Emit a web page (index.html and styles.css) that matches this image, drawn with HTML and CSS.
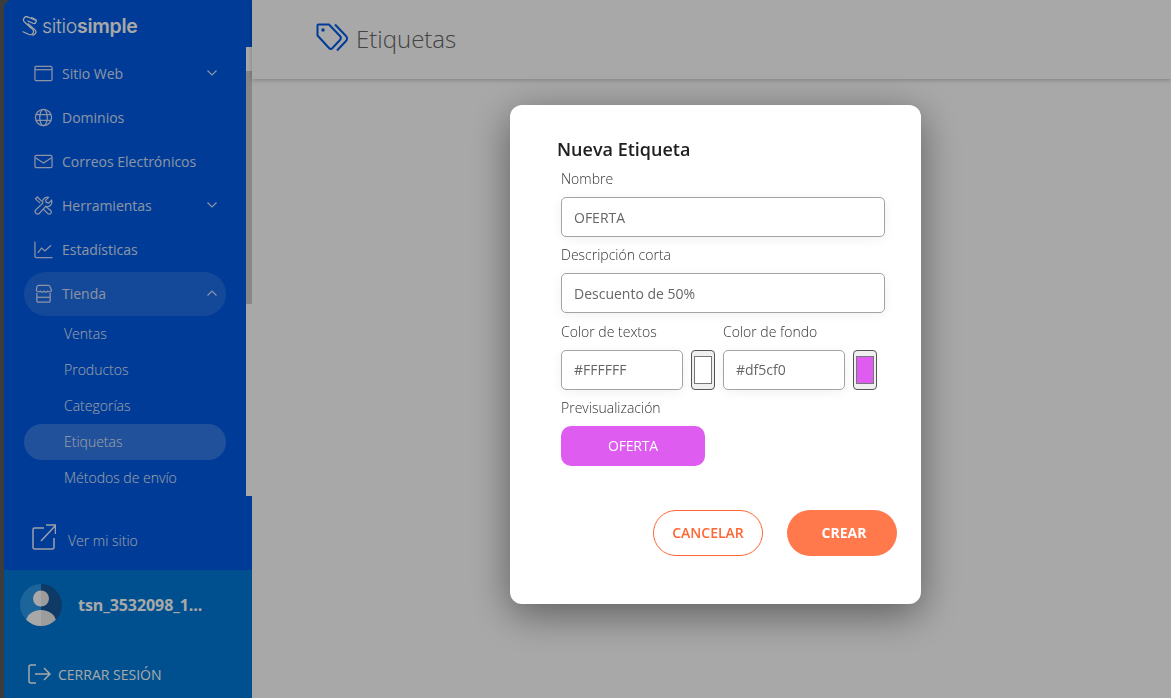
FILE: index.html
```html
<!DOCTYPE html>
<html lang="es">
<head>
  <meta charset="UTF-8">
  <meta name="viewport" content="width=device-width, initial-scale=1.0">
  <title>Etiquetas</title>
  <link rel="stylesheet" href="styles.css">
</head>
<body>
  <div class="side-frame">
    <aside class="sidebar">
      <div class="logo">
        <svg class="logo-mark" viewBox="0 0 15 20" fill="none" stroke="currentColor" stroke-width="1.200" stroke-linecap="round">
          <path d="M14 4.500 6.500 1.200A3 3 0 0 0 3 6.500L9.500 12.500A3 3 0 0 1 7 18.500L1 15.800"/>
          <path d="M9.500 1.500 12.800 3A2.300 2.300 0 0 1 11 7.300L5.800 5"/>
          <path d="M6 7.800 12.500 13.500A3 3 0 0 1 9.800 18.800"/>
        </svg>
        <span>sitio<b>simple</b></span>
      </div>
      <div class="nav-wrap">
        <nav class="nav">
          <a class="nav-item">
            <svg class="nav-icon" viewBox="0 0 20 20"><rect x="1" y="2.500" width="18" height="15" rx="1.500"/><path d="M1 6h18"/></svg>
            <span>Sitio Web</span>
            <svg class="chev" viewBox="0 0 12 8"><path d="M1.500 1.500 6 6l4.500-4.500"/></svg>
          </a>
          <a class="nav-item">
            <svg class="nav-icon" viewBox="0 0 20 20"><circle cx="10" cy="10" r="8.500"/><ellipse cx="10" cy="10" rx="4" ry="8.500"/><path d="M2 7h16M2 13h16"/></svg>
            <span>Dominios</span>
          </a>
          <a class="nav-item">
            <svg class="nav-icon" viewBox="0 0 20 20"><rect x="1" y="3.500" width="18" height="13" rx="1.500"/><path d="m1.500 6 8.500 5.500L18.500 6"/></svg>
            <span>Correos Electrónicos</span>
          </a>
          <a class="nav-item">
            <svg class="nav-icon" viewBox="0 0 20 20"><path d="m18.500 4.500-3 3-2.500-.7-.7-2.500 3-3a5 5 0 0 0-6 6.200L2 14.500a2.600 2.600 0 0 0 3.700 3.700L12.300 11a5 5 0 0 0 6.200-6.500z"/><path d="M6.500 7.500 1.500 3 3.500 1 8.300 5.700"/><path d="m11.800 10.500 6 5a2.300 2.300 0 0 1-2.800 3.400L9.500 13.500"/></svg>
            <span>Herramientas</span>
            <svg class="chev" viewBox="0 0 12 8"><path d="M1.500 1.500 6 6l4.500-4.500"/></svg>
          </a>
          <a class="nav-item">
            <svg class="nav-icon" viewBox="0 0 20 20"><path d="M1 1.500V17a1.500 1.500 0 0 0 1.500 1.500H19.500"/><path d="m4 13.500 4-5 3.500 3L18 5.500"/></svg>
            <span>Estadísticas</span>
          </a>
          <a class="nav-item nav-open">
            <svg class="nav-icon" viewBox="0 0 20 20"><path d="M5 1.500h10q1.500 0 2 1.500l1.500 4q-2 2.500-4 .5-2 2-4 0-2 2-4 0-2 2-4-.5L3 3q.5-1.500 2-1.500z"/><path d="M3 9.500V18a1 1 0 0 0 1 1h12a1 1 0 0 0 1-1V9.500"/><path d="M3 14h14"/></svg>
            <span>Tienda</span>
            <svg class="chev" viewBox="0 0 12 8"><path d="M1.500 6.500 6 2l4.500 4.500"/></svg>
          </a>
          <a class="sub-item">Ventas</a>
          <a class="sub-item">Productos</a>
          <a class="sub-item">Categorías</a>
          <a class="sub-item sub-active">Etiquetas</a>
          <a class="sub-item">Métodos de envío</a>
        </nav>
        <div class="scroll-track"><div class="scroll-thumb"></div></div>
      </div>
      <a class="site-link">
        <svg class="site-icon" viewBox="0 0 24 26"><path d="M12 4H2.500A1.500 1.500 0 0 0 1 5.500v18A1.500 1.500 0 0 0 2.500 25h18a1.500 1.500 0 0 0 1.500-1.500V14"/><path d="M9 17 23 2M14 1h9.500v9"/></svg>
        <span>Ver mi sitio</span>
      </a>
      <div class="account">
        <div class="user">
          <svg class="avatar" viewBox="0 0 42 42">
            <defs><clipPath id="round"><circle cx="21" cy="21" r="21"/></clipPath></defs>
            <g clip-path="url(#round)">
              <rect width="21" height="42" fill="#2a99ec"/>
              <rect x="21" width="21" height="42" fill="#1b60a7"/>
              <circle cx="21" cy="14.500" r="8" fill="#fff"/>
              <ellipse cx="21" cy="38" rx="15" ry="12" fill="#fff"/>
              <rect x="21" width="21" height="42" fill="#000" opacity=".07"/>
            </g>
          </svg>
          <span class="user-name">tsn_3532098_1...</span>
        </div>
        <a class="logout">
          <svg class="logout-icon" viewBox="0 0 23 20"><path d="M8 1H3a2 2 0 0 0-2 2v14a2 2 0 0 0 2 2h5"/><path d="M7 10h15M16 4l6 6-6 6"/></svg>
          <span>CERRAR SESIÓN</span>
        </a>
      </div>
    </aside>
  </div>

  <main class="content">
    <header class="page-head">
      <svg class="head-icon" viewBox="0 0 33 30">
        <path d="M2.500 1.500h10.500L24 13a3 3 0 0 1 0 4l-7.500 8a2.500 2.500 0 0 1-3.500 0L1.500 12.500V2.500a1 1 0 0 1 1-1z"/>
        <path d="M19 1.500 30 13a3.500 3.500 0 0 1 0 5L21 27.500"/>
        <circle cx="7" cy="7" r=".8"/>
      </svg>
      <h1>Etiquetas</h1>
    </header>
  </main>

  <div class="overlay">
    <form class="modal">
      <h2>Nueva Etiqueta</h2>
      <div class="fields">
        <label class="field">Nombre
          <input class="input" type="text" value="OFERTA">
        </label>
        <label class="field">Descripción corta
          <input class="input" type="text" value="Descuento de 50%">
        </label>
        <div class="color-row">
          <label class="field">Color de textos
            <span class="color-pick">
              <input class="input" type="text" value="#FFFFFF">
              <span class="swatch"><i class="swatch-white"></i></span>
            </span>
          </label>
          <label class="field">Color de fondo
            <span class="color-pick">
              <input class="input" type="text" value="#df5cf0">
              <span class="swatch"><i class="swatch-pink"></i></span>
            </span>
          </label>
        </div>
        <div class="field">Previsualización
          <div class="tag-preview">OFERTA</div>
        </div>
      </div>
      <div class="actions">
        <button type="button" class="btn btn-line">CANCELAR</button>
        <button type="button" class="btn btn-fill">CREAR</button>
      </div>
    </form>
  </div>
</body>
</html>
```

FILE: styles.css
```css
* {
  margin: 0;
  padding: 0;
  box-sizing: border-box;
}
html, body {
  height: 100%;
  overflow: hidden;
}
body {
  display: flex;
  background-color: #fff;
  font-family: "Open Sans", "Liberation Sans", sans-serif;
}
a {
  color: inherit;
  text-decoration: none;
}
svg {
  flex: none;
}

/* sidebar */
.side-frame {
  flex: none;
  width: 252px;
  height: 698px;
  padding-left: 4px;
  background-color: #5c5c5c;
}
.sidebar {
  display: flex;
  flex-direction: column;
  height: 100%;
  background-color: #005ce6;
  border-top-left-radius: 8px;
  color: #d6e0fa;
}
.logo {
  display: flex;
  align-items: center;
  gap: 5px;
  height: 47px;
  padding: 5px 0 0 18px;
  font-family: Inter, "Open Sans", sans-serif;
  font-size: 19.500px;
  font-weight: 300;
  letter-spacing: -.3px;
  color: #fff;
}
.logo b {
  font-weight: 600;
}
.logo-mark {
  width: 15px;
  height: 20px;
}
.nav-wrap {
  display: flex;
  height: 449px;
}
.nav {
  flex: 1;
  padding: 5px 20px 0;
}
.nav-item {
  display: flex;
  align-items: center;
  height: 44px;
  padding: 0 6px 2px 10px;
  border-radius: 22px;
  font-size: 14px;
  font-weight: 500;
}
.nav-item span {
  margin-left: 9px;
  flex: 1;
}
.nav-icon {
  width: 19px;
  height: 19px;
  fill: none;
  stroke: currentColor;
  stroke-width: 1.300;
}
.chev {
  width: 12px;
  height: 8px;
  margin-right: 2px;
  fill: none;
  stroke: currentColor;
  stroke-width: 1.200;
}
.nav-open {
  background-color: rgba(255, 255, 255, .12);
}
.sub-item {
  display: flex;
  align-items: center;
  height: 36px;
  padding: 0 0 2px 40px;
  border-radius: 18px;
  font-size: 14px;
  font-weight: 300;
  color: #eef3ff;
}
.sub-active {
  background-color: rgba(255, 255, 255, .2);
}
.scroll-track {
  flex: none;
  width: 6px;
  padding-top: 24px;
  background-color: #fff;
}
.scroll-thumb {
  height: 233px;
  background-color: #cdcdcd;
}
.site-link {
  display: flex;
  align-items: center;
  height: 74px;
  padding: 8px 0 0 28px;
  font-size: 14px;
  font-weight: 300;
  color: #eef3ff;
}
.site-icon {
  width: 24px;
  height: 26px;
  fill: none;
  stroke: currentColor;
  stroke-width: 1.500;
}
.site-link span {
  margin: 6px 0 0 12px;
}
.account {
  flex: 1;
  padding: 14px 0 0 16px;
  background-color: #007ad9;
  color: #fff;
}
.user {
  display: flex;
  align-items: center;
  gap: 16px;
}
.avatar {
  width: 42px;
  height: 42px;
}
.user-name {
  font-size: 16px;
  font-weight: 700;
  letter-spacing: -.07px;
}
.logout {
  display: flex;
  align-items: center;
  gap: 7px;
  margin: 38px 0 0 8px;
  font-size: 14px;
}
.logout-icon {
  width: 23px;
  height: 20px;
  fill: none;
  stroke: currentColor;
  stroke-width: 1.500;
}

/* page */
.content {
  flex: 1;
}
.page-head {
  display: flex;
  align-items: center;
  gap: 7px;
  height: 79px;
  padding: 0 0 2px 64px;
  background-color: #fff;
  box-shadow: 0 1px 5px rgba(0, 0, 0, .25);
}
.page-head h1 {
  font-size: 24px;
  font-weight: 300;
  color: #666;
}
.head-icon {
  width: 33px;
  height: 30px;
  margin-top: -1px;
  fill: none;
  stroke: #005ce6;
  stroke-width: 2;
}

/* modal */
.overlay {
  position: fixed;
  inset: 0;
  padding: 105px 0 0 510px;
  background-color: rgba(0, 0, 0, .34);
}
.modal {
  width: 411px;
  height: 499px;
  padding: 32px 24px 0 47px;
  background-color: #fff;
  border-radius: 12px;
  box-shadow: 0 10px 40px rgba(0, 0, 0, .45);
}
.modal h2 {
  font-size: 18px;
  font-weight: 600;
  line-height: 24px;
  color: #212121;
}
.fields {
  display: flex;
  flex-direction: column;
  gap: 8.330px;
  width: 324px;
  margin: 8px 0 0 4px;
}
.field {
  display: block;
  font-size: 14px;
  font-weight: 300;
  line-height: 19px;
  color: #333;
}
.input {
  display: block;
  width: 100%;
  height: 40px;
  margin-top: 9px;
  padding: 0 12px;
  border: 1px solid #a3a3a3;
  border-radius: 5px;
  font-family: inherit;
  font-size: 14px;
  color: #666;
  background-color: #fff;
  box-shadow: 0 2px 12px rgba(0, 0, 0, .06);
}
.color-row {
  display: flex;
  gap: 8px;
}
.color-row .field {
  width: 154px;
}
.color-pick {
  display: flex;
  gap: 8px;
  margin-top: 9px;
}
.color-pick .input {
  flex: 1;
  min-width: 0;
  margin-top: 0;
}
.swatch {
  flex: none;
  display: block;
  width: 24px;
  height: 40px;
  padding: 5px 2px;
  border: 1px solid #555;
  border-radius: 4px;
  background-color: #efefef;
}
.swatch i {
  display: block;
  height: 100%;
  border: 1px solid #777;
}
.swatch-white {
  background-color: #fff;
}
.swatch-pink {
  background-color: #df5cf0;
}
.tag-preview {
  width: 144px;
  height: 40px;
  margin-top: 9px;
  border-radius: 10px;
  background-color: #df5cf0;
  color: #fff;
  font-size: 14px;
  font-weight: 400;
  letter-spacing: -.2px;
  line-height: 40px;
  text-align: center;
}
.actions {
  display: flex;
  justify-content: flex-end;
  gap: 24px;
  margin-top: 44px;
}
.btn {
  width: 110px;
  height: 46px;
  border-radius: 23px;
  font-family: inherit;
  font-size: 14px;
  font-weight: 600;
}
.btn-line {
  border: 1px solid #ff6633;
  background-color: #fff;
  color: #ff6633;
}
.btn-fill {
  border: 0;
  padding-left: 4px;
  background-color: #ff794d;
  color: #fff;
  font-weight: 700;
}
```
